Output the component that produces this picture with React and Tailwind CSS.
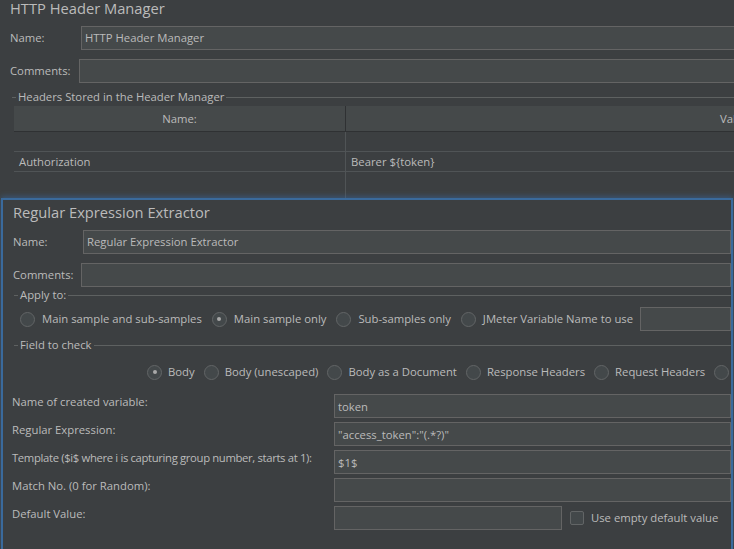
const FONT = { fontFamily: '"Open Sans", "Noto Sans", sans-serif' };

function Field({ label, labelW, value, inputClass = "flex-1" }) {
  return (
    <div className="flex h-[24px] items-center">
      <div className="shrink-0" style={{ width: labelW }}>
        {label}
      </div>
      <div
        className={`${inputClass} h-[24px] border border-[#646464] bg-[#45494a] px-[3px] leading-[22px]`}
      >
        {value}
      </div>
    </div>
  );
}

function TitledLine({ title, pad }) {
  return (
    <div className={`flex h-[14px] items-center ${pad}`}>
      <div className="h-px w-[4px] bg-[#5e6161]" />
      <span className="px-[2px] leading-[14px]">{title}</span>
      <div className="h-px flex-1 bg-[#5e6161]" />
    </div>
  );
}

function Radio({ label, checked, gap = "gap-[7px]" }) {
  return (
    <div className={`flex shrink-0 items-center ${gap}`}>
      <div className="flex h-[15px] w-[15px] items-center justify-center rounded-full border border-[#626566] bg-[#43484a]">
        {checked && <div className="h-[4px] w-[4px] rounded-full bg-[#a9a9a9]" />}
      </div>
      <span className="whitespace-nowrap">{label}</span>
    </div>
  );
}

function Row({ label, value, tight, children }) {
  return (
    <div className="flex h-[24px] items-center">
      <div
        className={`w-[322px] shrink-0 whitespace-nowrap pb-[8px] ${tight ? "tracking-[-0.35px]" : ""}`}
      >
        {label}
      </div>
      {children || (
        <div className="h-[24px] flex-1 border border-[#646464] bg-[#45494a] px-[3px] pt-[1px] leading-[22px]">
          {value}
        </div>
      )}
    </div>
  );
}

export default function App() {
  return (
    <div
      className="flex h-[549px] w-[734px] flex-col overflow-hidden bg-[#3c3f41] text-[11.3px] text-[#bbbbbb]"
      style={FONT}
    >
      {/* HTTP Header Manager */}
      <div className="flex h-[198px] w-[760px] shrink-0 flex-col">
        <div className="h-[17px] pl-[10px] text-[14.7px] leading-[17px]">
          HTTP Header Manager
        </div>
        <div className="mt-[9px] pl-[10px]">
          <Field label="Name:" labelW={71} value="HTTP Header Manager" />
        </div>
        <div className="mt-[9px] pl-[10px]">
          <Field label="Comments:" labelW={69} value="" />
        </div>
        <div className="mt-[7px]">
          <TitledLine title="Headers Stored in the Header Manager" pad="pl-[12px]" />
        </div>

        {/* table */}
        <div className="ml-[14px] mt-[2px] w-max">
          <div className="flex h-[26px] border-b border-[#2f3133] bg-[#45494a] leading-[25px]">
            <div className="w-[332px] border-r border-[#2f3133] text-center">Name:</div>
            <div className="w-[777px] text-center">Value</div>
          </div>
          {["", "Authorization|Bearer ${token}"].map((r, i) => {
            const [a, b] = r ? r.split("|") : ["", ""];
            return (
              <div key={i} className="flex h-[20px] border-b border-[#505456] leading-[19px]">
                <div className="w-[332px] border-r border-[#505456] pl-[5px]">{a}</div>
                <div className="w-[777px] pl-[5px]">{b}</div>
              </div>
            );
          })}
          <div className="flex h-[26px]">
            <div className="w-[332px] border-r border-[#505456]" />
            <div className="w-[777px]" />
          </div>
        </div>
      </div>

      {/* Regular Expression Extractor */}
      <div className="ml-[1px] flex h-[351px] w-[732px] shrink-0 flex-col border-x-2 border-t-2 border-[#3a6a9c] shadow-[0_-2px_5px_rgba(58,110,170,0.45)]">
        <div className="mt-[2px] h-[20px] pl-[10px] text-[14.7px] leading-[20px]">
          Regular Expression Extractor
        </div>
        <div className="mt-[8px] pl-[10px]">
          <Field label="Name:" labelW={70} value="Regular Expression Extractor" />
        </div>
        <div className="mt-[9px] pl-[10px]">
          <Field label="Comments:" labelW={68} value="" />
        </div>
        <div className="mt-[1px]">
          <TitledLine title="Apply to:" pad="pl-[11px]" />
        </div>

        <div className="mt-[5px] flex h-[24px] items-center gap-[10px] pl-[17px]">
          <Radio label="Main sample and sub-samples" />
          <Radio label="Main sample only" checked />
          <Radio label="Sub-samples only" />
          <div className="flex flex-1 items-center gap-[7px]">
            <Radio label="JMeter Variable Name to use" />
            <div className="h-[24px] flex-1 border border-[#646464] bg-[#45494a]" />
          </div>
        </div>

        <div className="mt-[7px]">
          <TitledLine title="Field to check" pad="pl-[11px]" />
        </div>

        <div className="mt-[10px] flex h-[20px] items-center gap-[9px] pl-[144px]">
          <Radio gap="gap-[6px]" label="Body" checked />
          <Radio gap="gap-[6px]" label="Body (unescaped)" />
          <Radio gap="gap-[6px]" label="Body as a Document" />
          <Radio gap="gap-[6px]" label="Response Headers" />
          <Radio gap="gap-[6px]" label="Request Headers" />
          <Radio gap="gap-[6px]" label="" />
        </div>

        <div className="mt-[12px] flex flex-col gap-[4px] pl-[9px]">
          <Row label="Name of created variable:" value="token" />
          <Row label="Regular Expression:" value={'"access_token":"(.*?)"'} />
          <Row
            tight
            label="Template ($i$ where i is capturing group number, starts at 1):"
            value="$1$"
          />
          <Row label="Match No. (0 for Random):" value="" />
          <Row label="Default Value:">
            <div className="flex flex-1 items-center">
              <div className="h-[24px] w-[228px] border border-[#646464] bg-[#45494a]" />
              <div className="ml-[8px] h-[14px] w-[14px] rounded-[2px] border border-[#626566] bg-[#43484a]" />
              <span className="ml-[7px] whitespace-nowrap">Use empty default value</span>
            </div>
          </Row>
        </div>
      </div>
    </div>
  );
}
